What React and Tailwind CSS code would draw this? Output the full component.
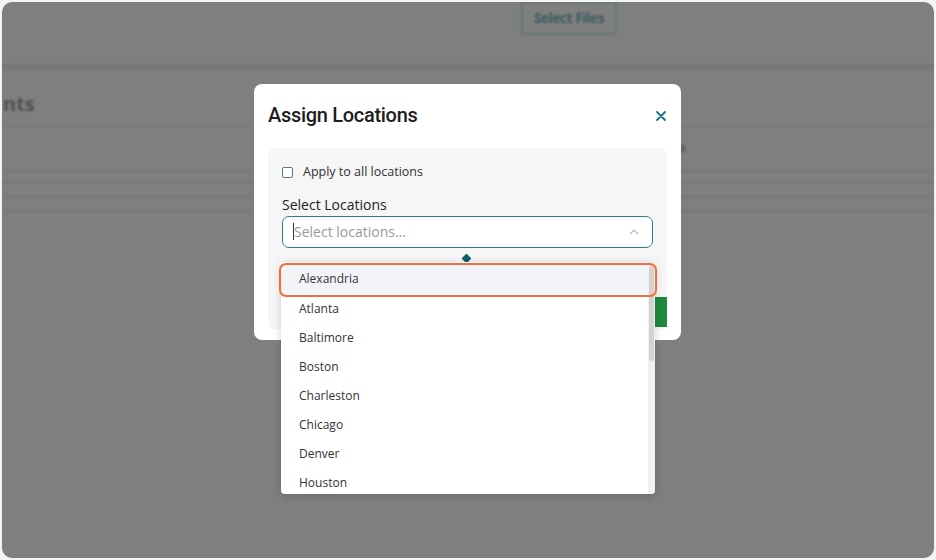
import React from 'react';

const locations = ['Alexandria', 'Atlanta', 'Baltimore', 'Boston', 'Charleston', 'Chicago', 'Denver', 'Houston'];

const App = () => {
    return (
        <div className="w-[936px] h-[560px] bg-[#f4f4f6] p-[2px]" style={{ fontFamily: '"Open Sans", sans-serif' }}>
            <div className="relative h-full rounded-[10px] bg-[#7f7f7f] overflow-hidden">
                {/* page behind the overlay */}
                <div className="blur-[1px]">
                    <div className="h-[62px] flex justify-center">
                        <div className="ml-[202px] -mt-[1px] h-[34px] px-[11px] border-2 border-[#617779] rounded-[3px] flex items-center text-[13.5px] font-bold text-[#385b60] tracking-tight">
                            Select Files
                        </div>
                    </div>
                    <div className="h-[6px] bg-[#767978]"></div>
                    <div className="h-[55px] flex items-end pb-[6px]">
                        <span className="text-[20px] font-bold text-[#505050] pl-[1px]">nts</span>
                    </div>
                    <div className="h-[1px] bg-[#737373]"></div>
                    <div className="h-[44px] flex items-center justify-end pr-[248px]">
                        <span className="text-[12px] font-bold text-[#555]">e</span>
                    </div>
                    <div className="h-[2px] bg-[#777]"></div>
                    <div className="h-[9px]"></div>
                    <div className="h-[2px] bg-[#777]"></div>
                    <div className="h-[13px]"></div>
                    <div className="h-[2px] bg-[#777]"></div>
                    <div className="h-[12px]"></div>
                    <div className="h-[2px] bg-[#777]"></div>
                </div>

                {/* modal */}
                <div className="absolute left-[252px] top-[82px] w-[427px] h-[256px] bg-white rounded-[8px] px-[14px]">
                    <div className="flex items-center justify-between h-[64px]">
                        <h2 className="text-[20px] font-medium text-[#1d1d1d] tracking-[-0.3px] -mt-[2px]" style={{ fontFamily: 'Roboto, sans-serif' }}>
                            Assign Locations
                        </h2>
                        <svg width="10" height="10" viewBox="0 0 10 10" className="mr-[1px] -mt-[1px]">
                            <path d="M1 1L9 9M9 1L1 9" stroke="#1a6f82" strokeWidth="1.8" strokeLinecap="round" />
                        </svg>
                    </div>
                    <div className="bg-[#f6f6f6] rounded-[8px] px-[14px] pt-[15px] pb-[14px] h-[182px]">
                        <label className="flex items-center gap-[10px] text-[12.5px] text-[#333]">
                            <span className="w-[11px] h-[11px] border border-[#4e7c88] rounded-[2px] bg-white"></span>
                            Apply to all locations
                        </label>
                        <div className="mt-[12px] text-[14px] text-[#222]">Select Locations</div>
                        <div className="relative mt-[1px]">
                            <div className="h-[32px] border border-[#2c7c8a] rounded-[7px] bg-white flex items-center px-[10px]">
                                <span className="w-[1px] h-[17px] bg-[#333]"></span>
                                <span className="text-[14px] text-[#9a9a9a]">Select locations...</span>
                                <svg width="10" height="6" viewBox="0 0 10 6" className="ml-auto mr-[3px]">
                                    <path d="M1 5L5 1L9 5" stroke="#b8b8b8" strokeWidth="1.1" fill="none" />
                                </svg>
                            </div>
                            <div className="absolute left-[181px] top-[39px] w-[7px] h-[7px] bg-[#155f6d] rotate-45 rounded-[1px]"></div>
                        </div>
                        <div className="flex justify-end mt-[49px] -mr-[14px]">
                            <div className="w-[14px] h-[30px] bg-[#208a3c] rounded-l-[2px]"></div>
                        </div>
                    </div>
                </div>

                {/* dropdown */}
                <div className="absolute left-[279px] top-[260px] w-[374px] h-[232px] bg-white rounded-[4px] shadow-[0_2px_8px_rgba(0,0,0,0.18)] overflow-hidden flex">
                    <div className="flex-1 pt-[2px]">
                        {locations.map((loc, i) => (
                            <div
                                key={loc}
                                className={
                                    'flex items-center pl-[18px] text-[12px] text-[#333]' +
                                    (i === 0 ? ' h-[30px] bg-[#f3f4f8]' : ' h-[29px]')
                                }
                            >
                                {loc}
                            </div>
                        ))}
                    </div>
                    <div className="w-[7px] bg-[#f1f1f1] pt-[3px] flex justify-center">
                        <div className="w-[5px] h-[96px] bg-[#d3d3d3] rounded-full"></div>
                    </div>
                </div>
                {/* focus ring over the active option */}
                <div className="absolute left-[277px] top-[261px] w-[378px] h-[34px] border-2 border-[#f26c3c] rounded-[7px]"></div>
            </div>
        </div>
    );
};

export default App;
